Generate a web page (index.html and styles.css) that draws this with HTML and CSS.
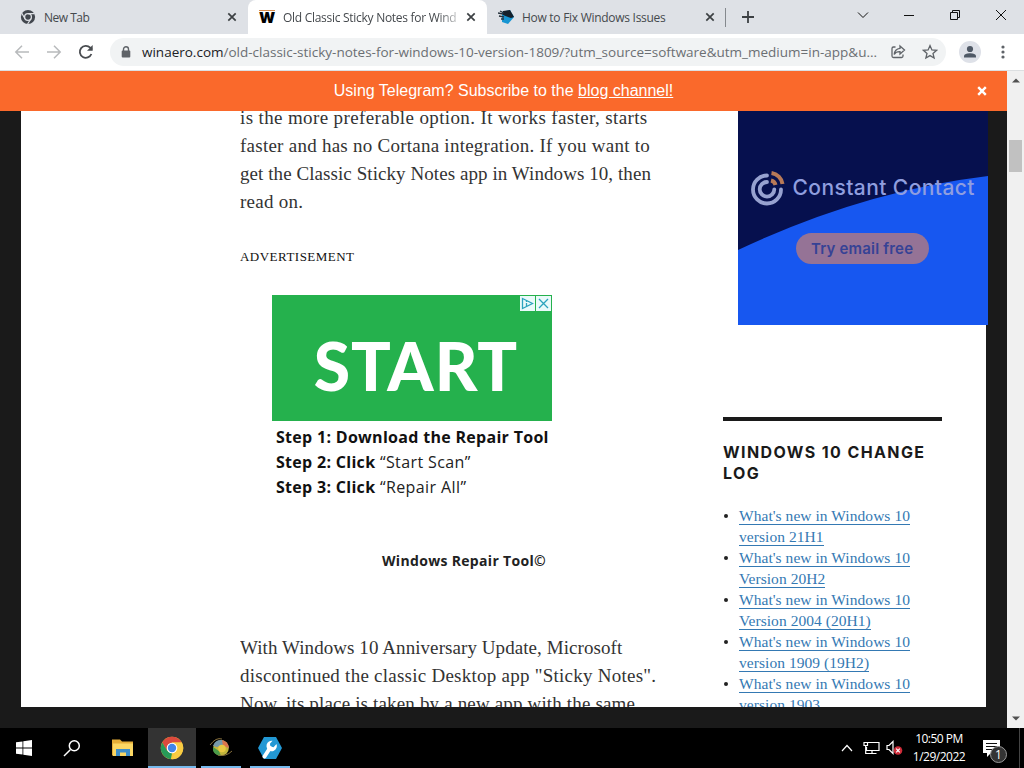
FILE: index.html
```html
<!DOCTYPE html>
<html lang="en">
<head>
    <meta charset="UTF-8">
    <meta name="viewport" content="width=device-width, initial-scale=1.0">
    <title>Old Classic Sticky Notes for Windows 10</title>
    <link rel="stylesheet" href="styles.css">
</head>
<body>
    <!-- Tabs -->
    <div class="tab-strip">
        <div class="tab tab-first">
            <svg class="tab-icon" viewBox="0 0 16 16"><circle cx="8" cy="8" r="7.1" fill="#42474e"/><circle cx="8" cy="8" r="3.4" fill="none" stroke="#dee1e6" stroke-width="1.3"/><path d="M8 4.6h6.6M5 9.7L1.8 4.2M10.9 9.7L7.6 15" stroke="#dee1e6" stroke-width="1.2"/></svg>
            <span class="tab-title new-tab-title">New Tab</span>
            <svg class="tab-close" viewBox="0 0 10 10"><path d="M1.3 1.3l7.4 7.4M8.7 1.3L1.3 8.7"/></svg>
        </div>
        <div class="tab tab-active">
            <span class="w-logo">W</span>
            <span class="tab-title active-title">Old Classic Sticky Notes for Wind</span>
            <svg class="tab-close" viewBox="0 0 10 10"><path d="M1.3 1.3l7.4 7.4M8.7 1.3L1.3 8.7"/></svg>
        </div>
        <div class="tab tab-last">
            <svg class="tab-icon" viewBox="0 0 16 16"><path d="M4 3l8-2 4 7-6 7-6-2z" fill="#1795d2"/><path d="M5 2l7-1 4 7-3 1-8-3z" fill="#15202b"/><path d="M0 4l5 1M1 7l5 1M2 2l4 2M3 10l3 0" stroke="#26323d" stroke-width="1.3"/></svg>
            <span class="tab-title last-title">How to Fix Windows Issues</span>
            <svg class="tab-close" viewBox="0 0 10 10"><path d="M1.3 1.3l7.4 7.4M8.7 1.3L1.3 8.7"/></svg>
        </div>
        <svg class="new-tab" viewBox="0 0 12 12"><path d="M6 0v12M0 6h12" stroke="#3c4043" stroke-width="1.8"/></svg>
        <div class="window-controls">
            <svg viewBox="0 0 12 12"><path d="M1 3.5l5 5 5-5"/></svg>
            <svg viewBox="0 0 12 12"><path d="M1 6.5h10"/></svg>
            <svg viewBox="0 0 12 12"><path d="M1.5 3.5h7v7h-7zM3.5 3.5v-2h7v7h-2"/></svg>
            <svg viewBox="0 0 12 12"><path d="M1 1l10 10M11 1L1 11"/></svg>
        </div>
    </div>

    <!-- Address bar -->
    <div class="toolbar">
        <svg class="nav-icon nav-off" viewBox="0 0 16 16"><path d="M15 8H2M8 1.8L1.8 8 8 14.2"/></svg>
        <svg class="nav-icon nav-off" viewBox="0 0 16 16"><path d="M1 8h13M8 1.8L14.2 8 8 14.2"/></svg>
        <svg class="nav-icon" viewBox="0 0 16 16"><path d="M13.4 10A6 6 0 1 1 12.2 3.7L14 5.6"/><path d="M14.7 1v5.8H9z" fill="#494c50" stroke="none"/></svg>
        <div class="address">
            <svg class="lock" viewBox="0 0 10 12"><path d="M2.5 5V3.3a2.5 2.5 0 0 1 5 0V5" fill="none" stroke="#5f6368" stroke-width="1.4"/><rect x="0.7" y="4.6" width="8.6" height="7" rx="1" fill="#5f6368"/></svg>
            <div class="url"><b>winaero.com</b>/old-classic-sticky-notes-for-windows-10-version-1809/?utm_source=software&amp;utm_medium=in-app&amp;u...</div>
            <svg class="share" viewBox="0 0 16 16"><path d="M5.500 3H3.500a1.500 1.500 0 0 0-1.500 1.500v7.500a1.500 1.500 0 0 0 1.500 1.500h8a1.500 1.500 0 0 0 1.500-1.500V10.500M10 2l4.500 4L10 10V7.700C7 7.600 5.300 8.600 4.200 10.500c.3-3.500 2.300-5.700 5.800-6.100z"/></svg>
            <svg class="star" viewBox="0 0 16 16"><path d="M8 1.600l1.900 4.300 4.700.4-3.600 3.100 1.100 4.600L8 11.600 3.900 14 5 9.400 1.400 6.300l4.700-.4z"/></svg>
        </div>
        <svg class="avatar" viewBox="0 0 22 22"><circle cx="11" cy="11" r="11" fill="#dee1e8"/><circle cx="11" cy="8" r="3.100" fill="#4f5966"/><path d="M5 16.500v-1.200c0-2.200 3.500-3 6-3s6 .8 6 3v1.200z" fill="#4f5966"/></svg>
        <svg class="menu-dots" viewBox="0 0 4 14"><circle cx="2" cy="2" r="1.600"/><circle cx="2" cy="7" r="1.600"/><circle cx="2" cy="12" r="1.600"/></svg>
    </div>

    <!-- Page -->
    <div class="viewport">
        <div class="page">
            <div class="banner">
                <span class="banner-text">Using Telegram? Subscribe to the <a href="#">blog channel!</a></span>
                <svg class="banner-close" viewBox="0 0 10 10"><path d="M1.200 1.200l7.600 7.600M8.800 1.200L1.200 8.800" stroke="#fff" stroke-width="2.400"/></svg>
            </div>
            <div class="sheet">
                <div class="article">
                    <p>
                        <span class="line l1">is the more preferable option. It works faster, starts</span>
                        <span class="line l2">faster and has no Cortana integration. If you want to</span>
                        <span class="line l3">get the Classic Sticky Notes app in Windows 10, then</span>
                        <span class="line l4">read on.</span>
                    </p>
                    <div class="ad-label">ADVERTISEMENT</div>
                    <div class="start-ad">
                        <div class="start-box">
                            <span class="start-text">START</span>
                            <div class="ad-choices">
                                <svg viewBox="0 0 15 15"><path d="M2.500 2.500l10 5-10 5zM6.500 7v3M6.500 5v1"/></svg>
                                <svg viewBox="0 0 15 15"><path d="M3 3l9 9M12 3l-9 9"/></svg>
                            </div>
                        </div>
                        <div class="step"><b>Step 1: Download the Repair Tool</b></div>
                        <div class="step"><b>Step 2: Click</b> “Start Scan”</div>
                        <div class="step"><b>Step 3: Click</b> “Repair All”</div>
                        <div class="ad-product">Windows Repair Tool©</div>
                    </div>
                    <p>
                        <span class="line l5">With Windows 10 Anniversary Update, Microsoft</span>
                        <span class="line l6">discontinued the classic Desktop app "Sticky Notes".</span>
                        <span class="line l7">Now, its place is taken by a new app with the same</span>
                    </p>
                </div>
                <div class="sidebar">
                    <div class="contact-ad">
                        <svg class="contact-art" viewBox="0 0 250 214">
                            <rect width="250" height="214" fill="#1757f0"/>
                            <path d="M0 0h250v65Q125 80 0 139z" fill="#06104e"/>
                            <g fill="none" stroke="#97a2d0" stroke-width="3.800" stroke-linecap="round">
                                <path d="M29 64.500a14 14 0 1 0 14 14"/>
                                <path d="M29 71a7.300 7.300 0 1 0 7.300 7.300"/>
                            </g>
                            <path d="M33.500 62a13 13 0 0 1 11 11M33 69.500a6 6 0 0 1 4.500 4.500" fill="none" stroke="#b87957" stroke-width="4"/>
                            <text class="contact-name" x="54.500" y="83.500" textLength="182">Constant Contact</text>
                            <rect x="58" y="122" width="133" height="31" rx="15.500" fill="#957396"/>
                            <text class="contact-cta" x="73" y="142.500" textLength="102">Try email free</text>
                        </svg>
                    </div>
                    <div class="widget">
                        <h2>WINDOWS 10 CHANGE LOG</h2>
                        <ul>
                            <li><a href="#">What's new in Windows 10<br>version 21H1</a></li>
                            <li><a href="#">What's new in Windows 10<br>Version 20H2</a></li>
                            <li><a href="#">What's new in Windows 10<br>Version 2004 (20H1)</a></li>
                            <li><a href="#">What's new in Windows 10<br>version 1909 (19H2)</a></li>
                            <li><a href="#">What's new in Windows 10<br>version 1903</a></li>
                        </ul>
                    </div>
                </div>
            </div>
        </div>
        <div class="scrollbar">
            <svg viewBox="0 0 8 5"><path d="M0 4.500L4 .5l4 4z"/></svg>
            <div class="thumb"></div>
            <svg viewBox="0 0 8 5"><path d="M0 .5l4 4 4-4z"/></svg>
        </div>
    </div>

    <!-- Taskbar -->
    <div class="taskbar">
        <div class="task"><svg width="16" height="16" viewBox="0 0 16 16"><path d="M0 2.300l6.500-.9v6.200H0zM7.300 1.200L16 0v7.600H7.300zM0 8.400h6.500v6.200L0 13.700zM7.300 8.400H16V16l-8.700-1.200z" fill="#fff"/></svg></div>
        <div class="task task-search"><svg width="18" height="18" viewBox="0 0 18 18"><path d="M7.300 10.700L1 17" stroke="#fff" stroke-width="1.500"/><circle cx="11.300" cy="6.700" r="5" fill="none" stroke="#fff" stroke-width="1.500"/></svg></div>
        <div class="task"><svg width="22" height="20" viewBox="0 0 22 20"><path d="M0 1.500h8l2 2h11v14H0z" fill="#e5ae38"/><path d="M1 5.500h20V18H1z" fill="#fbd764"/><path d="M4 11h14v7h-4v-3.500H8V18H4z" fill="#3e8ec9"/></svg></div>
        <div class="task task-current"><svg width="24" height="24" viewBox="0 0 24 24"><circle cx="12" cy="12" r="11.200" fill="#f5c83b"/><path d="M2.300 6.400A11.200 11.200 0 0 1 21.700 6.400H12L7 15z" fill="#dc4a3d"/><path d="M2.300 6.400L7.200 14.800 12 17.600 10.800 23.200A11.200 11.200 0 0 1 2.300 6.400z" fill="#279a58"/><path d="M12 6.400h9.700a11.200 11.200 0 0 1-9.900 16.800l5-8.400z" fill="#f9cc43"/><circle cx="12" cy="12" r="5.300" fill="#fff"/><circle cx="12" cy="12" r="4.200" fill="#4385e8"/></svg></div>
        <div class="task task-open"><svg width="24" height="20" viewBox="0 0 24 20"><circle cx="12" cy="10" r="7.800" fill="#c2b53c"/><path d="M4 8A8 8 0 0 1 13 2q5 1 7 8-6-4-12-1z" fill="#7799aa"/><path d="M13 2q6 1 7 8l-6-2z" fill="#dc754d"/><path d="M4 9q-1 8 8 9l-2-5z" fill="#4a9a48"/><circle cx="13" cy="10.500" r="3.800" fill="#eac943"/><path d="M1 7q6-8 12-6M9 17q8 2 14-4" fill="none" stroke="#87703d"/></svg></div>
        <div class="task task-open"><svg width="24" height="22" viewBox="0 0 24 22"><path d="M6 0h12l6 11-6 11H6L0 11z" fill="#2298d4"/><path d="M6.500 19.500L12 11" stroke="#fff" stroke-width="4" stroke-linecap="round"/><path d="M11 4.500a5.200 5.200 0 1 0 7.500 2.500l-3 3.300-3-.8-.6-2.800 2.600-3a5 5 0 0 0-3.500.8z" fill="#fff"/></svg></div>
        <div class="tray">
            <svg class="tray-up" width="12" height="8" viewBox="0 0 12 8"><path d="M1 7l5-5.500L11 7"/></svg>
            <svg width="17" height="14" viewBox="0 0 17 14"><path d="M5 1.500h11v8H3.500V6M1 1.500h3.500v3H1zM2.700 4.500v8h3M9 9.500v3M5.500 12.500h8"/></svg>
            <svg width="17" height="16" viewBox="0 0 17 16"><path d="M1 5.500h2l4-4v12l-4-4H1z"/><circle cx="12" cy="10.500" r="4.300" fill="#ce2b38" stroke="none"/><path d="M10.200 8.700l3.600 3.600M13.800 8.700l-3.600 3.600"/></svg>
            <div class="clock"><span>10:50 PM</span><span>1/29/2022</span></div>
            <div class="notifications">
                <svg width="17" height="17" viewBox="0 0 17 17"><path d="M0 0h17v13h-9l-4 4v-4H0z" fill="#fff"/><path d="M3 3.500h11M3 6.500h11M3 9.500h7" stroke="#111"/></svg>
                <span class="badge">1</span>
            </div>
            <div class="show-desktop"></div>
        </div>
    </div>
</body>
</html>
```
FILE: styles.css
```css
* {
    margin: 0;
    padding: 0;
    box-sizing: border-box;
}

body {
    width: 1024px;
    height: 768px;
    overflow: hidden;
    display: flex;
    flex-direction: column;
    background-color: #fff;
    font-family: "Open Sans", sans-serif;
}

svg {
    display: block;
    flex-shrink: 0;
}

/* Tabs */
.tab-strip {
    height: 34px;
    flex-shrink: 0;
    display: flex;
    align-items: center;
    background-color: #dee1e6;
}

.tab {
    height: 34px;
    display: flex;
    align-items: center;
    font-size: 12px;
    color: #45494d;
}

.tab-first {
    width: 248px;
    padding: 0 11px 0 20px;
}

.tab-active {
    width: 239px;
    padding: 0 11px;
    background-color: #fff;
    border-radius: 8px 8px 0 0;
}

.tab-last {
    width: 238px;
    padding: 0 10px 0 11px;
}

.tab-icon {
    width: 16px;
    height: 16px;
}

.w-logo {
    width: 16px;
    font: 900 15px/14px "Inter", sans-serif;
    color: #000;
    border-top: 1px solid #d88c4c;
    letter-spacing: -1px;
}

.tab-title {
    flex: 1;
    margin-left: 8px;
    white-space: nowrap;
}

.new-tab-title {
    letter-spacing: -0.5px;
}

.last-title {
    letter-spacing: -0.28px;
}

.active-title {
    letter-spacing: -0.28px;
    -webkit-mask-image: linear-gradient(to right, #000 155px, transparent 182px);
    mask-image: linear-gradient(to right, #000 155px, transparent 182px);
}

.tab-close {
    width: 10px;
    height: 10px;
    stroke: #3c4043;
    stroke-width: 1.7;
}

.new-tab {
    width: 12px;
    height: 12px;
    margin-left: 17px;
}

.tab-last::after {
    content: "";
    width: 1px;
    height: 19px;
    margin-left: 10px;
    margin-right: -11px;
    background-color: #85898e;
}

.window-controls {
    margin-left: auto;
    padding-right: 17px;
    margin-bottom: 5px;
    display: flex;
    gap: 34px;
}

.window-controls svg {
    width: 12px;
    height: 12px;
    fill: none;
    stroke: #111;
}

/* Address bar */
.toolbar {
    height: 37px;
    flex-shrink: 0;
    display: flex;
    align-items: center;
    padding: 0 19px 1px 14px;
    border-bottom: 1px solid #dcdfe1;
}

.nav-icon {
    width: 16px;
    height: 16px;
    margin-right: 16px;
    fill: none;
    stroke: #494c50;
    stroke-width: 1.8;
}

.nav-off {
    stroke: #b8babc;
    stroke-width: 1.5;
}

.address {
    width: 836px;
    height: 28px;
    display: flex;
    align-items: center;
    padding: 0 8px 0 11px;
    background-color: #f1f3f4;
    border-radius: 14px;
}

.lock {
    width: 10px;
    height: 12px;
}

.url {
    flex: 1;
    margin-left: 11px;
    white-space: nowrap;
    font-size: 13.5px;
    color: #6b6f73;
}

.url b {
    font-weight: normal;
    color: #202124;
}

.share,
.star {
    width: 16px;
    height: 16px;
    fill: none;
    stroke: #5f6368;
    stroke-width: 1.3;
}

.star {
    margin-left: 16px;
}

.avatar {
    width: 22px;
    height: 22px;
    margin-left: 13px;
}

.menu-dots {
    width: 4px;
    height: 14px;
    margin-left: auto;
    fill: #5f6368;
}

/* Page */
.viewport {
    height: 657px;
    flex-shrink: 0;
    display: flex;
}

.page {
    width: 1007px;
    background-color: #1a1a1a;
}

.banner {
    height: 40px;
    display: flex;
    align-items: center;
    padding-right: 20px;
    background-color: #fa692b;
    color: #fff;
    font: 16px "Liberation Sans", sans-serif;
}

.banner-text {
    flex: 1;
    padding-left: 30px;
    text-align: center;
}

.banner a {
    color: #fff;
}

.banner-close {
    width: 10px;
    height: 10px;
}

.sheet {
    width: 965px;
    height: 596px;
    margin-left: 21px;
    padding-left: 219px;
    display: flex;
    background-color: #fff;
}

.article {
    width: 483px;
    flex-shrink: 0;
    overflow: hidden;
    font: 19px/28px "Liberation Serif", serif;
    color: #333;
}

.article p {
    margin-top: -7px;
}

.line {
    display: block;
    white-space: nowrap;
    letter-spacing: 0.25px;
}

.l1 {
    letter-spacing: 0.37px;
}

.l3,
.l5 {
    letter-spacing: 0.07px;
}

.l7 {
    letter-spacing: 0.16px;
}

.ad-label {
    height: 20px;
    margin-top: 31px;
    font-size: 13px;
    line-height: 20px;
    letter-spacing: 0.48px;
    color: #111;
}

.start-ad {
    width: 280px;
    height: 346px;
    margin: 28px 0 0 32px;
    font: 16px/25px "Open Sans", sans-serif;
    color: #222;
}

.start-box {
    height: 126px;
    display: flex;
    position: relative;
    justify-content: center;
    align-items: center;
    margin-bottom: 4px;
    background-color: #25b14d;
}

.start-text {
    padding: 15px 0 0 8px;
    font: 900 66px "Lato", sans-serif;
    color: #fff;
    letter-spacing: 1px;
}

.ad-choices {
    position: absolute;
    top: 1px;
    right: 1px;
    display: flex;
    gap: 1px;
}

.ad-choices svg {
    width: 15px;
    height: 15px;
    background-color: #e9fafa;
    fill: none;
    stroke: #2ca3bd;
    stroke-width: 1.3;
}

.step {
    padding-left: 4px;
    white-space: nowrap;
    letter-spacing: 0.4px;
}

.step b {
    color: #111;
    letter-spacing: 0.3px;
}

.ad-product {
    margin-top: 48px;
    padding-right: 6px;
    text-align: right;
    font-size: 14px;
    font-weight: bold;
    letter-spacing: 0.32px;
}

.sidebar {
    width: 265px;
    flex-shrink: 0;
    overflow: hidden;
}

.contact-ad {
    height: 214px;
    margin-left: 15px;
}

.contact-art {
    width: 250px;
    height: 214px;
}

.contact-name {
    font: 500 21px "Inter", sans-serif;
    fill: #8f9edf;
}

.contact-cta {
    font: 600 15px "Inter", sans-serif;
    fill: #364295;
}

.widget {
    width: 219px;
    margin-top: 92px;
    padding-top: 21px;
    border-top: 4px solid #1a1a1a;
}

.widget h2 {
    font: bold 16px/21px "Inter", sans-serif;
    letter-spacing: 1.4px;
    color: #1a1a1a;
}

.widget ul {
    margin: 21px 0 0 16px;
    list-style: none;
    font: 15.5px/21px "Liberation Serif", serif;
}

.widget li {
    position: relative;
    white-space: nowrap;
}

.widget li::before {
    content: "";
    position: absolute;
    left: -15px;
    top: 9px;
    width: 4px;
    height: 4px;
    border-radius: 50%;
    background-color: #222;
}

.widget a {
    color: #3479b3;
    text-decoration: none;
    border-bottom: 1px solid #3479b3;
    letter-spacing: 0.05px;
}

.scrollbar {
    width: 17px;
    height: 657px;
    display: flex;
    flex-direction: column;
    align-items: center;
    padding: 7px 0;
    background-color: #f0f0f0;
}

.scrollbar svg {
    width: 8px;
    height: 5px;
    fill: #505050;
}

.thumb {
    width: 13px;
    height: 32px;
    margin-top: 57px;
    margin-bottom: auto;
    background-color: #c1c1c1;
}

/* Taskbar */
.taskbar {
    height: 40px;
    flex-shrink: 0;
    display: flex;
    background-color: #000;
}

.task {
    width: 48px;
    height: 40px;
    display: flex;
    justify-content: center;
    align-items: center;
    margin-right: 1px;
}

.task:first-child {
    margin-right: 0;
}

.task-search {
    margin-right: 3px;
}

.task-current {
    background-color: #333;
    box-shadow: inset 0 -2px #76b9ed;
}

.task-open {
    background: linear-gradient(#76b9ed, #76b9ed) center bottom / 40px 2px no-repeat;
}

.tray {
    margin-left: auto;
    display: flex;
    align-items: center;
}

.tray > svg {
    margin-right: 6px;
    fill: none;
    stroke: #fff;
    stroke-width: 1.2;
}

.tray > .tray-up {
    margin-right: 10px;
}

.clock {
    width: 60px;
    display: flex;
    flex-direction: column;
    align-items: center;
    font-size: 12px;
    line-height: 18px;
    letter-spacing: -0.5px;
    white-space: nowrap;
    color: #fff;
}

.notifications {
    position: relative;
    width: 17px;
    margin-left: 14px;
}

.badge {
    position: absolute;
    left: 7px;
    top: 6px;
    width: 17px;
    height: 17px;
    border: 1px solid #999;
    border-radius: 50%;
    background-color: #333;
    color: #fff;
    font-size: 12px;
    line-height: 15px;
    text-align: center;
}

.show-desktop {
    width: 1px;
    height: 40px;
    margin: 0 4px 0 19px;
    background-color: #444;
}
```
